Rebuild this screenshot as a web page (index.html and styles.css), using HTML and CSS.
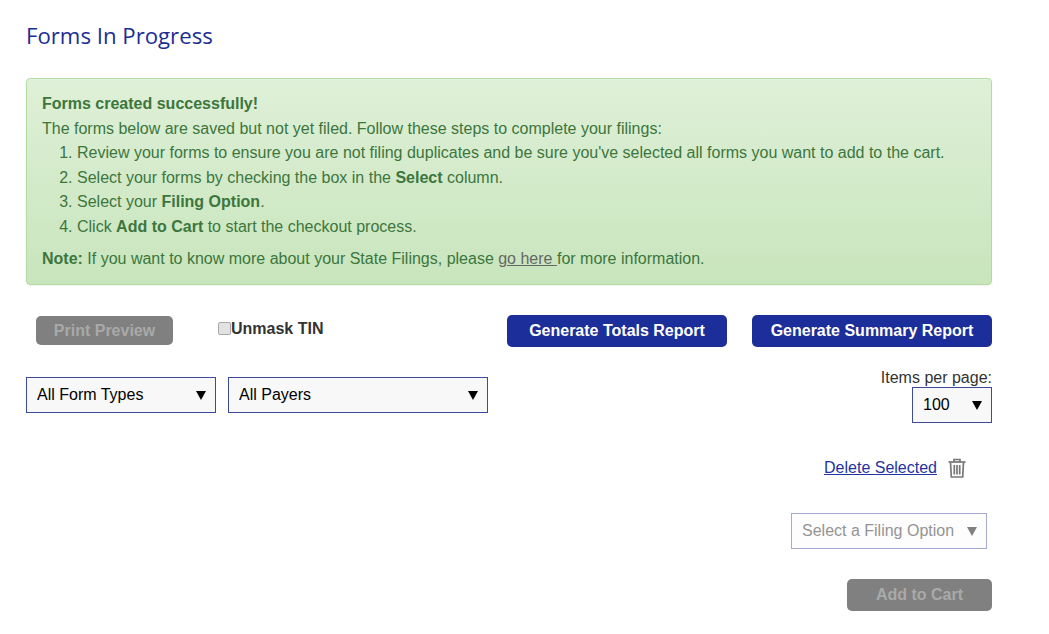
FILE: index.html
```html
<!DOCTYPE html>
<html lang="en">
<head>
    <meta charset="UTF-8">
    <meta name="viewport" content="width=device-width, initial-scale=1.0">
    <title>Forms In Progress</title>
    <link rel="stylesheet" href="styles.css">
</head>
<body>
    <div class="container">
        <h1>Forms In Progress</h1>

        <div class="alert">
            <p class="alert-title"><strong>Forms created successfully!</strong></p>
            <p>The forms below are saved but not yet filed. Follow these steps to complete your filings:</p>
            <ol>
                <li>Review your forms to ensure you are not filing duplicates and be sure you've selected all forms you want to add to the cart.</li>
                <li>Select your forms by checking the box in the <strong>Select</strong> column.</li>
                <li>Select your <strong>Filing Option</strong>.</li>
                <li>Click <strong>Add to Cart</strong> to start the checkout process.</li>
            </ol>
            <p class="alert-note"><strong>Note:</strong> If you want to know more about your State Filings, please <a href="#">go here </a>for more information.</p>
        </div>

        <div class="actions">
            <button class="btn btn-disabled btn-preview" disabled>Print Preview</button>
            <label class="unmask"><input type="checkbox" disabled>Unmask TIN</label>
            <button class="btn btn-primary btn-totals">Generate Totals Report</button>
            <button class="btn btn-primary btn-summary">Generate Summary Report</button>
        </div>

        <div class="filters">
            <div class="dropdown dropdown-types">
                <select><option>All Form Types</option></select>
            </div>
            <div class="dropdown dropdown-payers">
                <select><option>All Payers</option></select>
            </div>
            <div class="page-size">
                <label>Items per page:</label>
                <div class="dropdown dropdown-size">
                    <select><option>100</option></select>
                </div>
            </div>
        </div>

        <div class="delete-row">
            <a href="#">Delete Selected</a>
            <svg class="trash" width="18" height="20" viewBox="0 0 18 20" fill="none" stroke="#777" stroke-width="1.7">
                <path d="M0.5 4h17"/>
                <path d="M6 4V1.5h6V4"/>
                <path d="M2.5 4.5l0.8 14.5h11.4l0.8-14.5"/>
                <path d="M6.3 7v9.5M9 7v9.5M11.7 7v9.5"/>
            </svg>
        </div>

        <div class="filing-row">
            <div class="dropdown dropdown-filing">
                <select disabled><option>Select a Filing Option</option></select>
            </div>
        </div>

        <div class="cart-row">
            <button class="btn btn-disabled btn-cart" disabled>Add to Cart</button>
        </div>
    </div>
</body>
</html>
```

FILE: styles.css
```css
* {
    box-sizing: border-box;
}
body {
    margin: 0;
    background: white;
    font-family: "Liberation Sans", Arial, sans-serif;
    font-size: 16px;
    color: #333;
}
.container {
    width: 992px;
    padding: 0 0 23px 26px;
}
h1 {
    margin: 0;
    padding-top: 21px;
    height: 78px;
    font-family: "Open Sans", sans-serif;
    font-size: 22.2px;
    font-weight: 400;
    line-height: 30px;
    color: #1c2e94;
}
.alert {
    height: 207px;
    padding: 13px 15px 12px 15px;
    border: 1px solid #b2dba1;
    border-radius: 4px;
    background: linear-gradient(to bottom, #dff0d8, #c8e5bc);
    box-shadow: inset 0 1px 0 rgba(255,255,255,0.25), 0 1px 2px rgba(0,0,0,0.05);
    color: #3c763d;
    line-height: 24.6px;
}
.alert p {
    margin: 0;
}
.alert ol {
    margin: 0;
    padding-left: 35px;
}
.alert .alert-note {
    margin-top: 7px;
}
.alert a {
    color: #666;
    text-decoration: underline;
}
.actions {
    display: flex;
    align-items: flex-start;
    margin-top: 30px;
    height: 62px;
}
.btn {
    border: none;
    border-radius: 5px;
    font-family: inherit;
    font-size: 16px;
    font-weight: bold;
    padding: 0;
}
.btn-primary {
    height: 32px;
    background: #1c2e99;
    color: white;
}
.btn-disabled {
    height: 29px;
    background: #808080;
    color: #a9a9a9;
}
.btn-preview {
    width: 137px;
    margin: 1px 0 0 10px;
}
.btn-totals {
    width: 220px;
    margin-left: 0;
}
.btn-summary {
    width: 240px;
    margin-left: 25px;
}
.unmask {
    display: flex;
    align-items: center;
    width: 289px;
    margin-left: 45px;
    margin-top: 4px;
    font-weight: bold;
    line-height: 20px;
}
.unmask input {
    appearance: none;
    width: 13px;
    height: 13px;
    margin: -2px 0 0 0;
    border: 1px solid #a8a8a8;
    border-radius: 2px;
    background: #e2e2e2;
}
.filters {
    display: flex;
    gap: 12px;
    height: 74px;
}
.dropdown {
    position: relative;
    height: 36px;
    border: 1px solid #3d4a9c;
    background: #f8f8f8;
}
.dropdown::after {
    content: "";
    position: absolute;
    right: 9px;
    top: 13px;
    border-left: 5px solid transparent;
    border-right: 5px solid transparent;
    border-top: 9px solid black;
    pointer-events: none;
}
.dropdown select {
    appearance: none;
    width: 100%;
    height: 100%;
    padding: 0 10px 2px 10px;
    border: none;
    background: transparent;
    font-family: inherit;
    font-size: 16px;
    color: black;
}
.dropdown-types {
    width: 190px;
}
.dropdown-payers {
    width: 260px;
}
.page-size {
    display: flex;
    flex-direction: column;
    align-items: flex-end;
    margin-left: auto;
    margin-top: -9px;
    line-height: 19px;
}
.dropdown-size {
    width: 80px;
}
.delete-row {
    display: flex;
    align-items: center;
    justify-content: flex-end;
    gap: 11px;
    height: 34px;
    padding-right: 26px;
}
.delete-row a {
    color: #2433a0;
}
.filing-row {
    display: flex;
    justify-content: flex-end;
    margin-top: 28px;
    padding-right: 5px;
}
.dropdown-filing {
    width: 196px;
    border-color: #a4a9d2;
    background: #fdfdfd;
}
.dropdown-filing::after {
    border-top-color: #808080;
}
.dropdown-filing select {
    color: #949494;
    opacity: 1;
}
.cart-row {
    display: flex;
    justify-content: flex-end;
    margin-top: 30px;
}
.btn-cart {
    width: 145px;
    height: 32px;
}
```
